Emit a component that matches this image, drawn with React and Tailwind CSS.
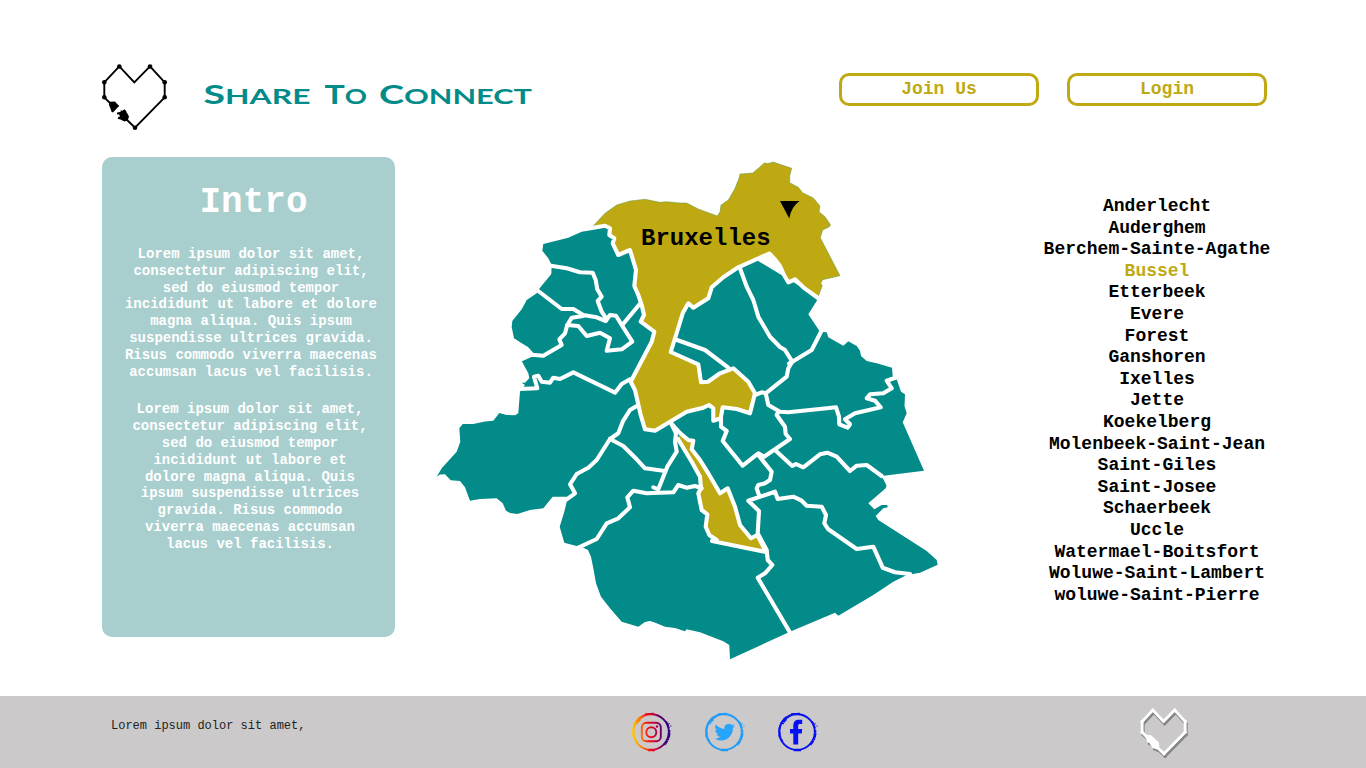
const communes = [
  'Anderlecht', 'Auderghem', 'Berchem-Sainte-Agathe', 'Bussel', 'Etterbeek', 'Evere', 'Forest',
  'Ganshoren', 'Ixelles', 'Jette', 'Koekelberg', 'Molenbeek-Saint-Jean', 'Saint-Giles',
  'Saint-Josee', 'Schaerbeek', 'Uccle', 'Watermael-Boitsfort', 'Woluwe-Saint-Lambert',
  'woluwe-Saint-Pierre',
];

const introOne = [
  'Lorem ipsum dolor sit amet,', 'consectetur adipiscing elit,', 'sed do eiusmod tempor',
  'incididunt ut labore et dolore', 'magna aliqua. Quis ipsum', 'suspendisse ultrices gravida.',
  'Risus commodo viverra maecenas', 'accumsan lacus vel facilisis.',
];
const introTwo = [
  'Lorem ipsum dolor sit amet,', 'consectetur adipiscing elit,', 'sed do eiusmod tempor',
  'incididunt ut labore et', 'dolore magna aliqua. Quis', 'ipsum suspendisse ultrices',
  'gravida. Risus commodo', 'viverra maecenas accumsan', 'lacus vel facilisis.',
];

const region =
  '590,227 588.3,230.7 581.7,231.7 568.3,237.7 543.3,244 542.3,250.7 548.3,258.3 551.7,265 551.3,274 539,289 536.7,293.3 526.7,300 521.7,309.3 512.3,321 511.7,327 514,338.3 521.7,343.3 528,347 533.3,352.7 521.7,361 528.3,373.3 529.3,378.3 525,382.7 521.7,382.7 525,385 521.7,389.3 520,391.7 518.3,413.3 515,415.3 506.7,415 499.3,413 493.3,420.7 485,421.5 473.3,424 462.7,424 459.3,428.3 460.3,441.7 456.7,451.7 441.7,468.3 436.7,476.7 440,474.5 445,474.3 450.7,480.3 460,481 465,487.3 470,500.7 480,499 496.7,498.3 502.7,503.3 506,510.7 510,513 517.3,514 530,510 543.3,508.3 552.7,496.7 566.7,496.7 566.7,501.7 564.3,511.7 559.7,526.7 564.3,542.7 576.7,546 583.3,547.7 588,550 591,556.7 593.3,568.3 596,583.3 601,596.7 610,608.3 621.7,621.7 638.3,626.7 645,622 650,621 656,623 665,626.7 675,628 685,631.3 686.7,629.3 700,632.3 723.3,641.3 729.3,645 730,659.3 790,631.7 835,612.7 838.3,615.7 873.3,595 893.3,581.7 906.7,575 920,572.7 937.7,564.7 936.7,560 926.7,551 878.3,520 875.7,516 883.3,508.3 887.7,507.3 887.3,505 881.7,505 874.3,509.3 868.3,503.3 885.7,488.3 886.5,485.5 881.7,476 924,470.7 902.7,422.3 906.7,413.3 904.5,406 905,394.3 901,391.7 896,377.3 892.7,376 892,367.7 876.7,363.3 866.7,361 861,356 860,350.7 856.7,346 848.3,341.3 843.3,345.7 828.3,337.3 826.7,332.3 820,331.7 808.3,314.3 816.7,301 818,297 740,250 610,225';

const brussels =
  '592,227 595,224 605,213.3 616.7,205 630,201 645,199.3 660,202.3 666.7,201.7 680,203 686.7,203 698.3,209 717.3,216 720,211.7 721,205 728.3,200 735,188.3 739,178.3 740,174 752.7,173 758.3,168.3 764.3,163 768,163.5 773.3,162 791.7,168.3 789.7,176 789.7,182.7 798.3,187.3 802.7,192.7 813.3,198 820,206 819,211.7 825,216.7 830.7,225 829,227 822.7,230 820.3,237.7 840,275.7 822.7,279.7 820.7,283.3 822.3,285.7 818,297 803.3,287.3 795,279.3 788.3,282.3 784,275 780,266 769.3,253.5 738.3,267.3 723.3,277.3 711.7,287.3 708.3,298.3 693.3,307.7 688.3,303.3 682.7,313.3 676.7,333 670.7,352 698.3,364.3 701,382.3 708,381.7 720,373.3 733.3,368.3 748.3,381.7 755,393.3 750,413.3 736.7,409 722.7,407.3 720.7,418.3 713.3,420.7 713.3,408.3 709,405 703.3,407.7 686.7,411.7 670,421.7 655,430.7 645,429.3 640.7,415 635,390 630.7,381.7 651.7,341.7 654.3,331.7 640.7,321.7 644,315 641.7,305 638.3,295 634.3,286 636,270 630,250 618.3,255 612.7,243.3 614.3,238.3 609.3,235 610,228.3 605,225.7';

const louise =
  '678,439 691.7,461.7 700,476.7 701,488.3 698.3,493.3 701.7,510 707.3,514.3 705.7,526.7 709.3,535 716.7,540 766,551 757.3,535 751,538.3 740,525 735,506.7 727.7,488.3 720,493.3 708.3,473.3 700,460 691.7,449.3 693.3,440.7 688.3,440 680,433';

const borders = [
  '818,298 803.3,287.3 795,279.3 788.3,282.3 784,275 780,266 775,259.5 769.3,253.5 738.3,267.3 723.3,277.3 711.7,287.3 708.3,298.3 693.3,307.7 688.3,303.3 682.7,313.3 676.7,333 670.7,352 698.3,364.3 701,382.3 708,381.7 720,373.3 733.3,368.3 748.3,381.7 755,393.3 750,413.3 736.7,409 722.7,407.3 720.7,418.3 713.3,420.7 713.3,408.3 709,405 703.3,407.7 686.7,411.7 670,421.7 655,430.7 645,429.3 640.7,415 635,390 630.7,381.7 651.7,341.7 654.3,331.7 640.7,321.7 644,315 641.7,305 638.3,295 634.3,286 636,270 630,250 618.3,255 612.7,243.3 614.3,238.3 609.3,235 610,228.3 605,225.7 589,228.5',
  '678,439 691.7,461.7 700,476.7 701,488.3 698.3,493.3 701.7,510 707.3,514.3 705.7,526.7 709.3,535 716.7,540 712,541 766,552 757.3,535 751,538.3 740,525 735,506.7 727.7,488.3 720,493.3 708.3,473.3 700,460 691.7,449.3 693.3,440.7 688.3,440 680,433 671,423',
  '550.7,265.7 566.7,268.3 580,272.3 592.7,272.7 595.7,280 597.3,289.3 601.7,296.7 597.7,301 601.7,311.7 606,318.3',
  '538.3,291 561.7,309 573.3,309 583.3,315 596.7,317.3 605.7,321 610,315 616,315.7 621.7,325 632.3,341.7 621.7,349.3 606.7,350.7 610,338.3 600,332.7 586.7,336 578.3,326 567.3,325',
  '583.3,316 571.7,317.7 567.3,325 565,333.3 559.3,339.3 561.7,345 543.3,355.7 531.7,354.7 521.7,359',
  '622.3,325 639.3,304.5',
  '519,389 537.3,388.3 534,376.7 538.3,375.7 541.7,381.7 550,382.7 553.3,377.7 560,379 573.3,372.3 615,392.7 621.7,384 630,379.3',
  '636.7,406 630,410 622.7,421.7 618.3,433.3 610,439 596.7,460 588.3,467.7 576.7,474 570,484.3 575,493.3 566.7,499.3',
  '610,439 623.3,446 636.7,459.3 645,468.3 665,471',
  '670.7,422.7 676,433.3 675,441.7 676.7,451.7 667.3,466.7 658.3,489.3 653.3,487.3',
  '576.7,548.3 596.7,539 606.7,523.3 618.3,518.3 630,507.3 627.3,497.3 633.3,490.7 646.7,493.3 673.3,492.3 678.3,485 686.7,487.7 695,486 701.7,488.3',
  '721,418.3 721,426.7 726.7,431 722.7,441 742.7,465.7 758.3,453.3 764,456.7 790,439 785.7,434 785,426.7 776.7,415 778.3,411.7',
  '755,395 761.7,392.3 765.7,393.3 768.3,405 780,411.7 788.3,412.3 810,410 831.7,407.7 836,407.3 839,416.7 839.3,424.3 847.7,427.7 850,424.3 845,419.3 855,413.3 880.7,407.3 875,400.7 866.7,398.3 870,394.3 883.3,393.3 891.7,388.3 886.7,380.7 897.5,377',
  '765.7,393.3 786.7,376.7 788.3,368.3 792.3,361.7 811.7,350 821,331.7',
  '740,268.3 746.7,286.7 753.3,300 758.3,316.7 770,336.7 780,347 785,350 792.3,361.7 789,363.5',
  '675,339.3 705,350 728.3,367.7',
  '775,450 792.3,466 796,464 803.3,467.3 820,454.3 827.3,452.7 836.7,456.7 850,471 856.7,465.7 866.7,465 881.7,476',
  '758.3,455 771.7,471.7 770,480 765,483.3 758.3,485 756.7,488.3 759,495',
  '790,632.5 757.7,577.7 765,573.3 772.3,565 767.7,560 766.7,550 757.7,533.3 759,511 748.3,500.7 775,491.7 777.7,499 793.3,496.7 801.7,500.7 806.7,505.7 821.7,506.7 826,515 824.3,523.3 828.3,529.3 856.7,549 873.3,546.7 882.7,567.7 895,572.2 910,574',
];

const heartLine =
  'M112 105 L104.3 97.3 V82.3 L119.3 66.3 L134.3 82.3 L150 66.3 L164.7 82.3 V97.3 L135 127.7 L125 118';
const heartDots = [
  [119.3, 66.5], [150, 66.5], [164.7, 82.3], [164.7, 97.3], [135, 127.7], [104.3, 97.3], [104.3, 82.3],
];

function HeartDrawing() {
  return (
    <>
      <path d={heartLine} fill="none" stroke="currentColor" strokeWidth="1.9" />
      {heartDots.map(([x, y]) => (
        <circle key={`${x}-${y}`} cx={x} cy={y} r="2.3" fill="currentColor" />
      ))}
      <path d="M108.8 104.5 L110 101.8 L115 101.6 L116.2 103 L119.3 106 L117.6 107.5 L113 112.6 L111.5 111.8 L110.5 108.8 Z" fill="currentColor" />
      <path d="M121.2 111.8 L123.8 109.8 L126.8 112.6 L129 116.6 L127.8 120.3 L124.5 121.6 L120.5 119.6 L117.6 118.8 L118.4 117 L120 116.4 L119.2 114.6 L116.8 114.2 L117.2 112.6 Z" fill="currentColor" />
      <path d="M121.4 113.6 V110.6 M126 112 L124 109.8" stroke="currentColor" strokeWidth="1.6" />
    </>
  );
}

function Wordmark() {
  return (
    <svg width="336" height="34" viewBox="200 77 336 34" className="block fill-[#028b88] [font-family:Lato,sans-serif] font-bold" role="heading">
      <text x="203.5" y="103.6" fontSize="26.5" textLength="107" lengthAdjust="spacingAndGlyphs">S<tspan fontSize="21.5" className="uppercase">hare</tspan></text>
      <text x="324.5" y="103.6" fontSize="26.5" textLength="42.5" lengthAdjust="spacingAndGlyphs">T<tspan fontSize="21.5" className="uppercase">o</tspan></text>
      <text x="379" y="103.6" fontSize="26.5" textLength="153" lengthAdjust="spacingAndGlyphs">C<tspan fontSize="21.5" className="uppercase">onnect</tspan></text>
    </svg>
  );
}

function BrushRing({ color }) {
  return (
    <g fill="none" stroke={color}>
      <circle cx="20" cy="20" r="17.8" strokeWidth="1.9" />
      <path d="M2.6 25 C1 18 3 9 9.5 5 M5.5 29.5 C1 22 2 12 7.5 7.5" strokeWidth="1.6" strokeDasharray="3 1.1 1.4 .8 5 1" />
      <path d="M7 8.5 L13 3.2 M5.5 12 L9 7.5" strokeWidth="2" strokeDasharray="1.6 .7" />
      <path d="M33.5 33 C38 28 39.5 22 38 17 M35 9.5 C36.5 11.5 37.5 14 38 16" strokeWidth="1.8" strokeDasharray="5 .8 2 .7" />
      <path d="M17 38.4 L24 38.5 M14 2 L23 1.5" strokeWidth="1.5" />
      <path d="M39.3 14 h1.2 M37.6 11.6 h1" strokeWidth="1.2" />
    </g>
  );
}

function Instagram() {
  return (
    <svg width="42" height="42" viewBox="-1 -1 42 42">
      <defs>
        <linearGradient id="ig" gradientUnits="userSpaceOnUse" x1="1" y1="20" x2="39" y2="16">
          <stop offset="0" stopColor="#ffd000" />
          <stop offset=".22" stopColor="#ff7b00" />
          <stop offset=".42" stopColor="#f5101c" />
          <stop offset=".6" stopColor="#c2003d" />
          <stop offset=".78" stopColor="#570070" />
          <stop offset="1" stopColor="#2b008c" />
        </linearGradient>
      </defs>
      <BrushRing color="url(#ig)" />
      <g fill="none" stroke="url(#ig)" strokeWidth="1.9">
        <rect x="10.8" y="10.8" width="19" height="18.4" rx="4.5" />
        <circle cx="20.3" cy="20.2" r="5" />
      </g>
      <circle cx="26" cy="14.5" r="1.2" fill="#b00045" />
    </svg>
  );
}

function Twitter() {
  return (
    <svg width="42" height="42" viewBox="-1 -1 42 42">
      <BrushRing color="#219bf8" />
      <path transform="translate(10.4 9.8) scale(.86)" fill="#29a4fb" d="M23.95 4.57a10 10 0 0 1-2.82.77 4.96 4.96 0 0 0 2.16-2.72c-.95.55-2 .95-3.13 1.18a4.92 4.92 0 0 0-8.38 4.48C7.69 8.09 4.07 6.13 1.64 3.16a4.9 4.9 0 0 0 1.52 6.57 4.9 4.9 0 0 1-2.23-.61v.06a4.92 4.92 0 0 0 3.95 4.83 5 5 0 0 1-2.21.08 4.94 4.94 0 0 0 4.6 3.42A9.87 9.87 0 0 1 0 19.54a13.99 13.99 0 0 0 7.55 2.21c9.05 0 14-7.5 14-13.98 0-.21 0-.42-.02-.63a9.94 9.94 0 0 0 2.46-2.55z" />
    </svg>
  );
}

function Facebook() {
  return (
    <svg width="42" height="42" viewBox="-1 -1 42 42">
      <BrushRing color="#0710ee" />
      <path fill="#0710ee" d="M16.3 32.5 V21.4 H13 V17 H16.3 V14 C16.3 9.6 18.3 7.8 22 7.8 H25.2 V12 H23 C21.7 12 21.2 12.6 21.2 14 V17 H25.2 L24.8 21.4 H21.2 V32.5 Z" />
    </svg>
  );
}

function RegionMap() {
  return (
    <svg width="515" height="510" viewBox="430 155 515 510" className="block">
      <polygon points={region} fill="#028b88" />
      <polygon points={brussels} fill="#bfa912" stroke="#5f9a4a" strokeWidth=".5" />
      <polygon points={louise} fill="#bfa912" />
      <g fill="none" stroke="#fff" strokeWidth="4.1" strokeLinejoin="round" strokeLinecap="round">
        {borders.map((points) => (
          <polyline key={points} points={points} />
        ))}
      </g>
      <path d="M780 201 H799.5 Q791 207 789.3 218.5 Z" fill="#000" />
      <text x="641" y="245.3" fontSize="24" fontWeight="700" className="[font-family:'Liberation_Mono',monospace]">Bruxelles</text>
    </svg>
  );
}

function PillButton({ children }) {
  return (
    <button className="h-[33px] w-[200px] rounded-[10px] border-3 border-[#bfa912] text-lg leading-[27px] font-bold text-[#bfa912]">
      {children}
    </button>
  );
}

export default function App() {
  return (
    <div className="flex h-[768px] w-[1366px] flex-col overflow-hidden bg-white text-black [font-family:'Liberation_Mono',monospace]">
      <header className="flex h-[157px] shrink-0 items-start pl-[100px]">
        <svg width="70" height="70" viewBox="100 62 70 70" className="mt-[62px] shrink-0">
          <HeartDrawing />
        </svg>
        <div className="mt-[77px] ml-[30px] shrink-0">
          <Wordmark />
        </div>
        <nav className="mt-[73px] ml-[303px] flex gap-7">
          <PillButton>Join Us</PillButton>
          <PillButton>Login</PillButton>
        </nav>
      </header>

      <main className="flex h-[539px] shrink-0 items-start pl-[102px]">
        <section className="h-[480px] w-[293px] shrink-0 rounded-[10px] bg-[#a8cecd] text-center font-bold text-white">
          <h1 className="pt-[24px] pl-[10px] text-[36px] leading-[43px]">Intro</h1>
          <div className="pt-[22px] pl-[3px] text-sm leading-[16.8px] whitespace-nowrap">
            <p className="pl-[2px]">
              {introOne.map((line) => <span key={line} className="block">{line}</span>)}
            </p>
            <p className="mt-[21px]">
              {introTwo.map((line) => <span key={line} className="block">{line}</span>)}
            </p>
          </div>
        </section>
        <div className="-mt-[2px] ml-[35px] shrink-0">
          <RegionMap />
        </div>
        <ul className="mt-[39px] ml-[82px] w-[260px] shrink-0 text-center text-lg leading-[21.6px] font-bold">
          {communes.map((name) => (
            <li key={name} className={name === 'Bussel' ? 'text-[#bfa912]' : ''}>{name}</li>
          ))}
        </ul>
      </main>

      <footer className="flex h-[72px] shrink-0 items-start bg-[#cbc9ca] pl-[111px]">
        <p className="mt-[22px] w-[519px] shrink-0 text-xs text-[#222]">Lorem ipsum dolor sit amet,</p>
        <div className="mt-[15px] flex gap-[31px]">
          <Instagram />
          <Twitter />
          <Facebook />
        </div>
        <svg width="50" height="52" viewBox="100 62 70 73" className="mt-[11px] ml-[321px]">
          <g transform="translate(1.5 3.5)" className="text-[#858585]" strokeWidth="4">
            <path d={heartLine} fill="none" stroke="currentColor" strokeWidth="4" />
            <HeartDrawing />
          </g>
          <g className="text-white">
            <path d={heartLine} fill="none" stroke="currentColor" strokeWidth="4" />
            <HeartDrawing />
            <path d="M108 103 L116 101 L128 112 L128 121 L119 119 Z" fill="currentColor" />
          </g>
        </svg>
      </footer>
    </div>
  );
}
